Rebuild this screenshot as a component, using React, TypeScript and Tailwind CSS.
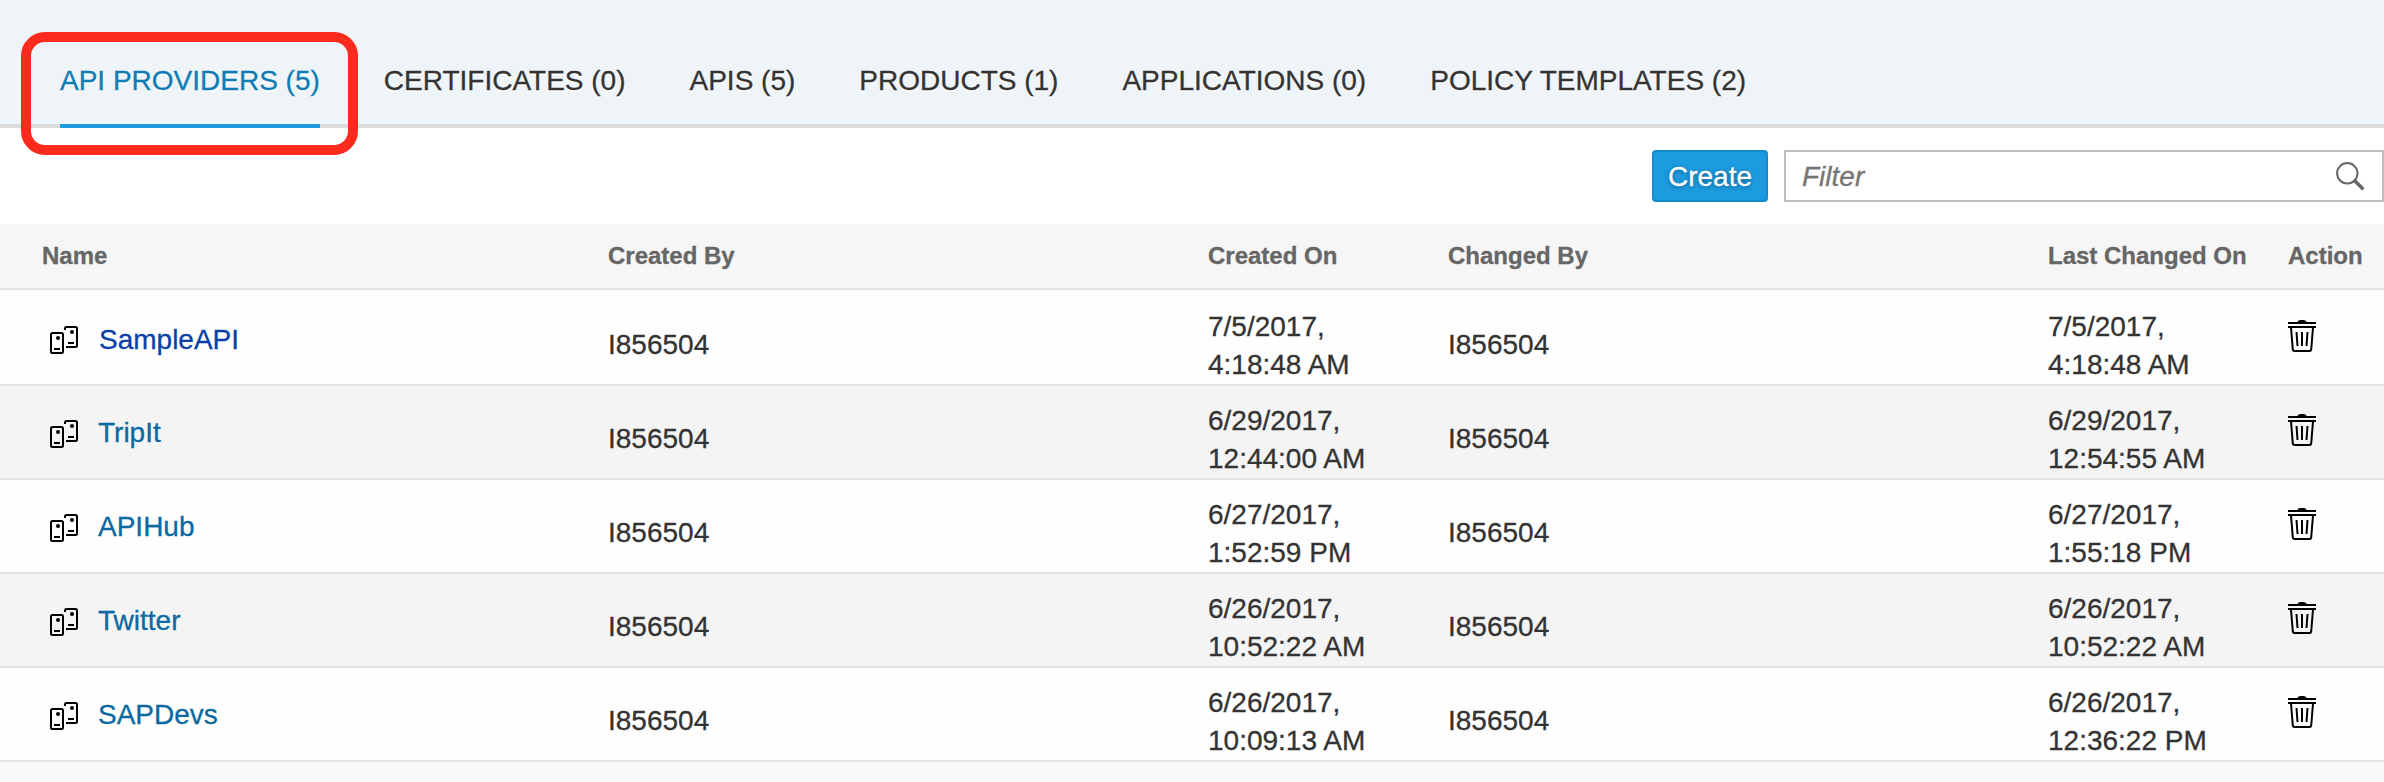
const tabs = [
  "API PROVIDERS (5)",
  "CERTIFICATES (0)",
  "APIS (5)",
  "PRODUCTS (1)",
  "APPLICATIONS (0)",
  "POLICY TEMPLATES (2)",
];

const columns = ["Name", "Created By", "Created On", "Changed By", "Last Changed On", "Action"];

const rows = [
  { name: "SampleAPI", created: ["7/5/2017,", "4:18:48 AM"], changed: ["7/5/2017,", "4:18:48 AM"] },
  { name: "TripIt", created: ["6/29/2017,", "12:44:00 AM"], changed: ["6/29/2017,", "12:54:55 AM"] },
  { name: "APIHub", created: ["6/27/2017,", "1:52:59 PM"], changed: ["6/27/2017,", "1:55:18 PM"] },
  { name: "Twitter", created: ["6/26/2017,", "10:52:22 AM"], changed: ["6/26/2017,", "10:52:22 AM"] },
  { name: "SAPDevs", created: ["6/26/2017,", "10:09:13 AM"], changed: ["6/26/2017,", "12:36:22 PM"] },
];

const user = "I856504";
const grid = "grid grid-cols-[566px_600px_240px_600px_240px_96px] pl-[42px]";

function ProviderIcon() {
  return (
    <svg width="28" height="28" viewBox="0 0 28 28" fill="none" stroke="#000" strokeWidth="2">
      <rect x="1" y="7" width="12" height="20" rx="1.5" />
      <path d="M15 4V2.500Q15 1 16.500 1H25.500Q27 1 27 2.500V19.500Q27 21 25.500 21H16" />
      <path d="M4 23H10M18 17H24" />
      <circle cx="8" cy="12" r="2" fill="#000" stroke="none" />
      <circle cx="22" cy="6" r="2" fill="#000" stroke="none" />
    </svg>
  );
}

function TrashIcon() {
  return (
    <svg width="28" height="32" viewBox="0 0 28 32" fill="none" stroke="#000" strokeWidth="2">
      <path d="M9 2.500Q10 0 12 0H16Q18 0 19 2.500Z" fill="#000" stroke="none" />
      <path d="M0 3H28M0 7H28" />
      <path d="M3 7.500L4.800 29.500Q5 31 6.500 31H21.500Q23 31 23.200 29.500L25 7.500" />
      <path d="M8.500 12L9.500 26M14 12V26M19.500 12L18.500 26" />
    </svg>
  );
}

function SearchIcon() {
  return (
    <svg width="28" height="28" viewBox="0 0 28 28" fill="none" stroke="#666">
      <circle cx="11.3" cy="11.3" r="10.2" strokeWidth="2" />
      <path d="M19 19L26.300 26.300" strokeWidth="3.400" strokeLinecap="round" />
    </svg>
  );
}

export default function App() {
  return (
    <div className="h-[782px] w-[2384px] overflow-hidden bg-[#fafafa] font-['Liberation_Sans',Arial,sans-serif] text-[28px] text-[#333] [-webkit-text-stroke:0.3px]">
      <nav className="relative flex h-32 gap-16 border-b-4 border-[#dcdcdc] bg-[#eff4f9] pl-[60px]">
        {tabs.map((tab, i) => (
          <div
            key={tab}
            className={
              i === 0
                ? "-mb-1 h-32 border-b-4 border-[#1c9be0] pt-[61px] leading-10 whitespace-nowrap text-[#0f7cb4] [text-shadow:0_2px_0_#fff]"
                : "pt-[61px] leading-10 whitespace-nowrap [text-shadow:0_2px_0_#fff]"
            }
          >
            {tab}
          </div>
        ))}
        <div className="absolute top-8 left-[21px] h-[123px] w-[337px] rounded-3xl border-[10px] border-[#fd2b1d]" />
      </nav>

      <div className="flex h-24 items-center justify-end gap-4 bg-white">
        <button className="flex h-[52px] w-[116px] items-center justify-center rounded-[4px] border-2 border-[#148bcb] bg-[#1c9be0] pt-0.5 leading-10 text-white [text-shadow:0_1px_4px_rgba(0,0,0,0.45)]">
          Create
        </button>
        <label className="flex h-[52px] w-[600px] items-center justify-between border-2 border-[#bfbfbf] bg-white pr-[18px] pl-4 text-[#757575] italic">
          <span className="pt-0.5 leading-10">Filter</span>
          <SearchIcon />
        </label>
      </div>

      <div className={`${grid} h-[66px] border-b-2 border-[#e4e4e4] bg-[#f6f6f6] text-2xl leading-[64px] font-bold text-[#666]`}>
        {columns.map((column) => (
          <div key={column} className="whitespace-nowrap">
            {column}
          </div>
        ))}
      </div>

      {rows.map((row, i) => (
        <div
          key={row.name}
          className={`${grid} border-b-2 border-[#e4e4e4] ${i === 0 ? "h-24 pt-0.5" : "h-[94px]"} ${i % 2 ? "bg-[#f4f4f4]" : "bg-[#fefefe]"}`}
        >
          <div className="flex items-start gap-5 pl-2">
            <span className="pt-[34px]">
              <ProviderIcon />
            </span>
            <span className={i === 0 ? "pt-[29px] pl-px leading-[38px] text-[#0b3fa8]" : "pt-7 leading-[38px] text-[#0a69a1]"}>
              {row.name}
            </span>
          </div>
          <div className="pt-[34px] leading-[38px]">{user}</div>
          <div className="pt-4 leading-[38px]">
            {row.created.map((line) => (
              <div key={line}>{line}</div>
            ))}
          </div>
          <div className="pt-[34px] leading-[38px]">{user}</div>
          <div className="pt-4 leading-[38px]">
            {row.changed.map((line) => (
              <div key={line}>{line}</div>
            ))}
          </div>
          <div className="pt-7">
            <TrashIcon />
          </div>
        </div>
      ))}
    </div>
  );
}
